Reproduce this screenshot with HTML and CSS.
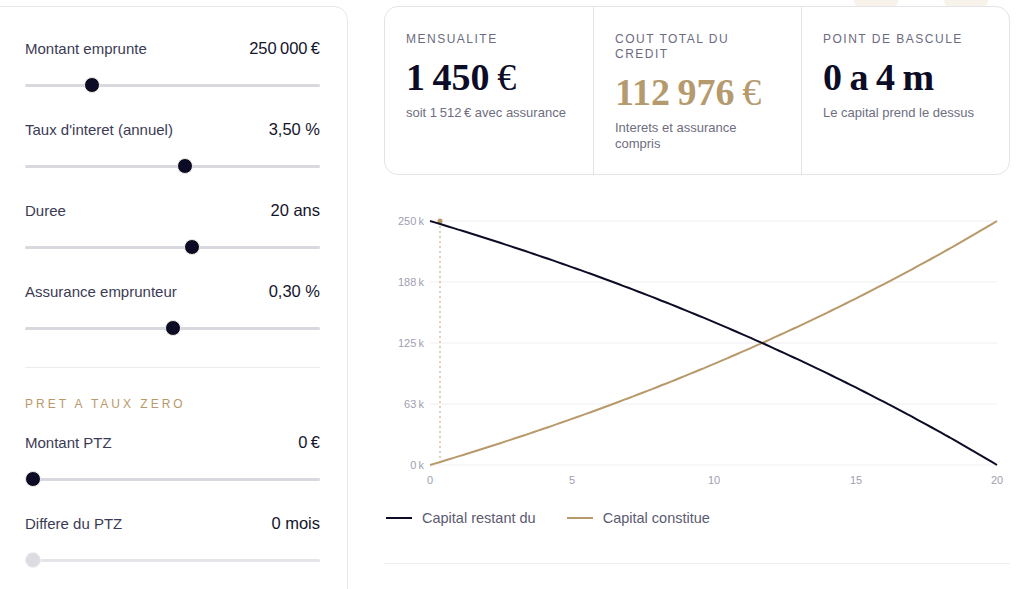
FILE: index.html
```
<!DOCTYPE html>
<html lang="fr">
<head>
	<meta charset="UTF-8">
	<title>Simulateur de pret</title>
	<link rel="stylesheet" href="styles.css">
	<script>
	window.onload = function(){
		var P = 250000;			//capital emprunte
		var r = 0.035 / 12;		//taux mensuel
		var n = 240;			//nombre de mensualites
		var x0 = 46, x1 = 613;	//bornes horizontales du graphe
		var y0 = 265, y1 = 21;	//0k et 250k
		var q = Math.pow(1 + r, n);

		var dRest = '', dBuilt = '';
		for ( var m = 0; m <= n; m += 2 ) {
			var rest = P * ( q - Math.pow(1 + r, m) ) / ( q - 1 );
			var x = x0 + ( x1 - x0 ) * m / n;
			var yR = y0 + ( y1 - y0 ) * rest / P;
			var yB = y0 + ( y1 - y0 ) * ( P - rest ) / P;
			dRest += ( m ? 'L' : 'M' ) + x.toFixed(1) + ' ' + yR.toFixed(1);
			dBuilt += ( m ? 'L' : 'M' ) + x.toFixed(1) + ' ' + yB.toFixed(1);
		}
		document.getElementById('line-rest').setAttribute('d', dRest);
		document.getElementById('line-built').setAttribute('d', dBuilt);
	}
	</script>
</head>
<body>
	<div class="page">
		<aside class="controls">
			<div class="field">
				<div class="field-head"><span class="field-label">Montant emprunte</span><span class="field-value">250&#8239;000&#8239;€</span></div>
				<input class="slider" type="range" min="50000" max="1000000" step="1000" value="250000">
			</div>
			<div class="field">
				<div class="field-head"><span class="field-label">Taux d'interet (annuel)</span><span class="field-value">3,50 %</span></div>
				<input class="slider" type="range" min="0.5" max="6" step="0.05" value="3.5">
			</div>
			<div class="field">
				<div class="field-head"><span class="field-label">Duree</span><span class="field-value">20 ans</span></div>
				<input class="slider" type="range" min="0" max="35" step="1" value="20">
			</div>
			<div class="field">
				<div class="field-head"><span class="field-label">Assurance emprunteur</span><span class="field-value">0,30 %</span></div>
				<input class="slider" type="range" min="0" max="0.6" step="0.01" value="0.3">
			</div>

			<hr class="sep">

			<h3 class="section-title">PRET A TAUX ZERO</h3>
			<div class="field">
				<div class="field-head"><span class="field-label">Montant PTZ</span><span class="field-value">0&#8239;€</span></div>
				<input class="slider" type="range" min="0" max="100000" step="1000" value="0">
			</div>
			<div class="field">
				<div class="field-head"><span class="field-label">Differe du PTZ</span><span class="field-value">0 mois</span></div>
				<input class="slider" type="range" min="0" max="180" step="12" value="0" disabled>
			</div>
		</aside>

		<main class="results">
			<span class="deco deco-a"></span>
			<span class="deco deco-b"></span>

			<section class="summary">
				<div class="stat">
					<div class="stat-label">MENSUALITE</div>
					<div class="stat-value">1&#8239;450&#8239;<span class="euro">€</span></div>
					<div class="stat-note">soit 1&#8239;512&#8239;€ avec assurance</div>
				</div>
				<div class="stat">
					<div class="stat-label">COUT TOTAL DU CREDIT</div>
					<div class="stat-value gold">112&#8239;976&#8239;<span class="euro">€</span></div>
					<div class="stat-note">Interets et assurance compris</div>
				</div>
				<div class="stat">
					<div class="stat-label">POINT DE BASCULE</div>
					<div class="stat-value">0 a 4 m</div>
					<div class="stat-note">Le capital prend le dessus</div>
				</div>
			</section>

			<svg class="chart" width="626" height="295" viewBox="0 0 626 295">
				<g class="grid">
					<line x1="46" y1="21" x2="613" y2="21"/>
					<line x1="46" y1="82" x2="613" y2="82"/>
					<line x1="46" y1="143" x2="613" y2="143"/>
					<line x1="46" y1="204" x2="613" y2="204"/>
					<line x1="46" y1="265" x2="613" y2="265"/>
				</g>
				<g class="axis-y">
					<text x="40" y="25">250&#8201;k</text>
					<text x="40" y="86">188&#8201;k</text>
					<text x="40" y="147">125&#8201;k</text>
					<text x="40" y="208">63&#8201;k</text>
					<text x="40" y="269">0&#8201;k</text>
				</g>
				<g class="axis-x">
					<text x="46" y="284">0</text>
					<text x="188" y="284">5</text>
					<text x="330" y="284">10</text>
					<text x="472" y="284">15</text>
					<text x="613" y="284">20</text>
				</g>
				<line class="pivot" x1="56" y1="21" x2="56" y2="265"/>
				<circle class="pivot-dot" cx="56" cy="21" r="2.5"/>
				<path id="line-built" class="curve curve-built" d=""/>
				<path id="line-rest" class="curve curve-rest" d=""/>
			</svg>

			<div class="legend">
				<span class="legend-item"><i class="swatch swatch-rest"></i>Capital restant du</span>
				<span class="legend-item"><i class="swatch swatch-built"></i>Capital constitue</span>
			</div>

			<hr class="rule">
		</main>
	</div>
</body>
</html>
```

FILE: styles.css
```
* { margin:0; padding:0; box-sizing:border-box; }
body { background:#fff; font-family:"Liberation Sans", Arial, sans-serif; color:#14142b; overflow:hidden; }

.page { display:flex; align-items:flex-start; padding-top:6px; }

/* colonne des reglages */
.controls { width:378px; min-height:640px; margin-left:-30px; border:1px solid #e7e7eb; border-radius:14px; padding:31px 27px 0 54px; flex-shrink:0; }
.field-head { display:flex; justify-content:space-between; align-items:center; height:20px; }
.field-label { font-size:15px; color:#3b3b55; }
.field-value { font-size:16.5px; color:#14142b; }

.slider { -webkit-appearance:none; appearance:none; display:block; width:100%; height:16px; margin:19px 0 26px; background:transparent; }
.slider::-webkit-slider-runnable-track { height:3px; background:#d8d8df; border-radius:2px; }
.slider::-webkit-slider-thumb { -webkit-appearance:none; width:16px; height:16px; margin-top:-6.5px; border-radius:50%; background:#0b0b26; border:1px solid #f1eadf; }
.slider:disabled::-webkit-slider-runnable-track { background:#e4e4e9; }
.slider:disabled::-webkit-slider-thumb { background:#dcdce2; border-color:#f4f1ec; }

.sep { border:0; border-top:1px solid #ececf0; margin:31px 0 28px; }
.section-title { font-size:12px; line-height:16px; font-weight:normal; letter-spacing:3px; color:#b8996a; margin-bottom:20px; }

/* colonne des resultats */
.results { position:relative; width:626px; margin-left:36px; }
.deco { position:absolute; top:-34px; width:46px; height:46px; border-radius:50%; background:#f7f2ea; z-index:0; }
.deco-a { left:469px; }
.deco-b { left:559px; }

.summary { position:relative; z-index:1; display:grid; grid-template-columns:repeat(3, 1fr); height:169px; background:#fff; border:1px solid #e4e4e8; border-radius:14px; }
.stat { padding:25px 22px 0 21px; }
.stat + .stat { border-left:1px solid #e4e4e8; }
.stat-label { font-size:12px; line-height:15px; letter-spacing:1.5px; color:#6b6b80; }
.stat-value { margin-top:8px; font-family:"Liberation Serif", "Times New Roman", serif; font-weight:bold; font-size:38px; line-height:44px; letter-spacing:-1px; color:#0c0c27; }
.stat-value .euro { font-weight:normal; }
.stat-value.gold { color:#b59a6e; }
.stat-note { margin-top:6px; font-size:13px; line-height:16px; color:#6e6e80; }

.chart { display:block; margin-top:25px; }
.chart .grid line { stroke:#efeff2; stroke-width:1; }
.chart text { font-family:"Liberation Sans", Arial, sans-serif; font-size:11px; fill:#a0a0b0; }
.chart .axis-y text { text-anchor:end; }
.chart .axis-x text { text-anchor:middle; }
.chart .pivot { stroke:#c8b28e; stroke-width:1.2; stroke-dasharray:2 3; }
.chart .pivot-dot { fill:#b8996a; }
.chart .curve { fill:none; stroke-width:2; stroke-linejoin:round; }
.chart .curve-rest { stroke:#0c0c27; }
.chart .curve-built { stroke:#b8996a; }

.legend { display:flex; gap:31px; margin-top:14px; padding-left:2px; font-size:14.5px; line-height:18px; color:#5b5b70; }
.legend-item { display:flex; align-items:center; gap:10px; }
.swatch { display:block; width:26px; height:2px; }
.swatch-rest { background:#0c0c27; }
.swatch-built { background:#b8996a; }

.rule { border:0; border-top:1px solid #eeeef1; margin-top:36px; }
```
